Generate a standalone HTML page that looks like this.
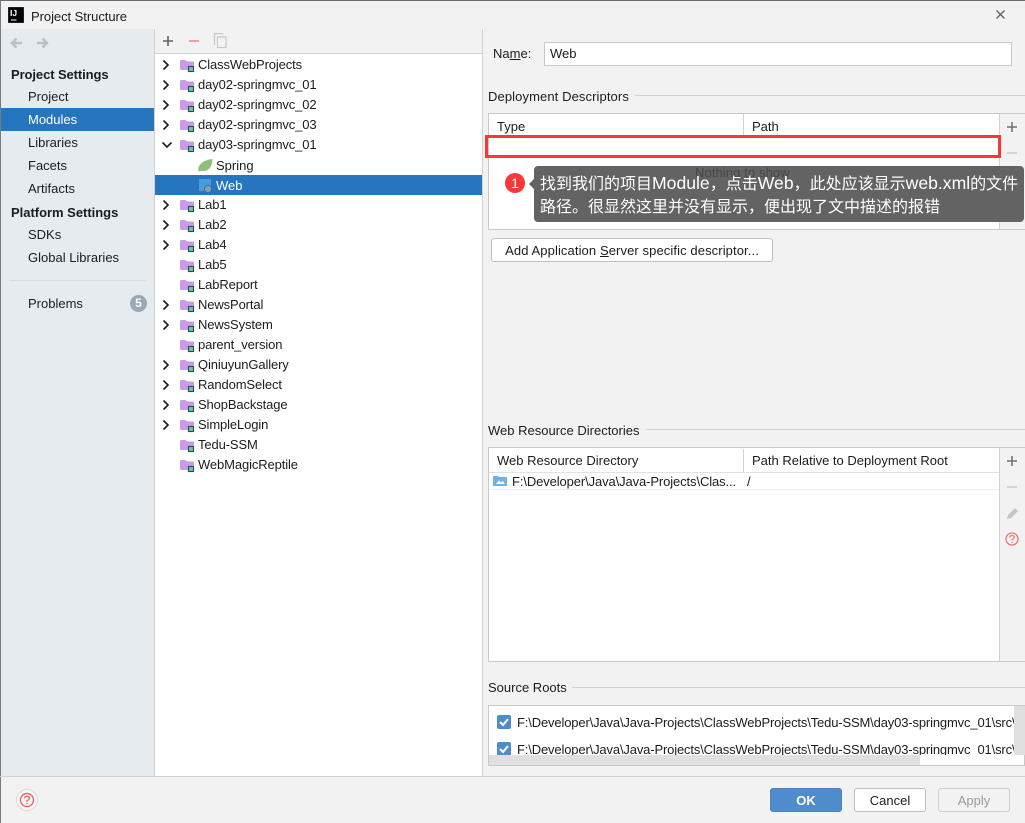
<!DOCTYPE html>
<html><head><meta charset="utf-8"><title>Project Structure</title>
<style>
html,body{margin:0;padding:0}
body{width:1025px;height:823px;overflow:hidden;position:relative;background:#f2f2f2;font:13px/20px "Liberation Sans","Noto Sans CJK SC",sans-serif;color:#1c1c1c}
div,span,svg{position:absolute}
.t{white-space:nowrap;margin-top:1px}
.s{left:28px}
.b{font-weight:bold;left:11px}
.n{left:198px;letter-spacing:-.12px}
.ln{height:1px;background:#d1d1d1}
.box{background:#fff;border:1px solid #c9c9c9;box-sizing:border-box}
.btn{box-sizing:border-box;border:1px solid #bfbfbf;border-radius:3px;background:#fff;text-align:center;line-height:23px}
u{text-decoration:underline}
em{font-style:normal;font-size:17.6px}
</style></head><body>
<svg width="0" height="0" style="position:absolute">
<defs>
<symbol id="f" viewBox="0 0 18 16"><path d="M1 4.5Q1 3 2.5 3H6.5L8 4.5H14Q15 4.5 15 5.5V13H2.5Q1 13 1 11.5Z" fill="#c89ae8"/><rect x="9.5" y="9.5" width="5" height="5" fill="#6fc0ad" stroke="#24514a" stroke-width="1.1"/></symbol>
<symbol id="r" viewBox="0 0 10 12"><path d="M2.5 1.5L7 6L2.5 10.5" fill="none" stroke="#1c1c1c" stroke-width="1.6"/></symbol>
</defs></svg>

<div style="left:0;top:0;width:1025px;height:1px;background:#6b6b6b"></div>
<div style="left:0;top:0;width:1px;height:823px;background:#7a7a7a"></div>

<!-- title bar -->
<svg style="left:8px;top:7px" width="16" height="16" viewBox="0 0 16 16"><rect width="16" height="16" fill="#000"/><rect x="0" y="0" width="16" height="16" fill="none" stroke="#1f7fd1" stroke-width=".6"/><text x="2" y="9" font-family="Liberation Sans" font-weight="bold" font-size="8.5" fill="#fff">IJ</text><rect x="3" y="12.5" width="5.5" height="1" fill="#fff"/></svg>
<span class="t" style="left:31px;top:6px;letter-spacing:-.05px">Project Structure</span>
<svg style="left:995px;top:9px" width="12" height="12"><path d="M1.5 1.5L9.5 9.5M9.5 1.5L1.5 9.5" stroke="#5c6166" stroke-width="1.3"/></svg>

<!-- sidebar -->
<div style="left:1px;top:29px;width:153px;height:747px;background:#e6ebf0"></div>
<div style="left:154px;top:29px;width:1px;height:747px;background:#cfd2d4"></div>
<svg style="left:10px;top:37px" width="40" height="12"><path d="M2 6H12M6.5 1.5L2 6L6.5 10.5" fill="none" stroke="#bcc0c4" stroke-width="2.4"/><path d="M27 6H37M32.5 1.5L37 6L32.5 10.5" fill="none" stroke="#bcc0c4" stroke-width="2.4"/></svg>
<span class="t b" style="top:64px;letter-spacing:-.09px">Project Settings</span>
<span class="t s" style="top:86px">Project</span>
<div style="left:1px;top:108px;width:153px;height:23px;background:#2675bf"></div>
<span class="t s" style="top:109px;color:#fff">Modules</span>
<span class="t s" style="top:132px">Libraries</span>
<span class="t s" style="top:155px">Facets</span>
<span class="t s" style="top:178px">Artifacts</span>
<span class="t b" style="top:202px;letter-spacing:-.02px">Platform Settings</span>
<span class="t s" style="top:224px">SDKs</span>
<span class="t s" style="top:247px">Global Libraries</span>
<div style="left:10px;top:280px;width:136px;height:1px;background:#dcdfe2"></div>
<span class="t s" style="top:293px">Problems</span>
<div style="left:130px;top:295px;width:17px;height:17px;border-radius:50%;background:#9aa7b5;color:#fff;font-weight:bold;font-size:12px;line-height:17px;text-align:center">5</div>

<!-- tree toolbar -->
<div style="left:155px;top:29px;width:327px;height:24px;background:#f2f2f2"></div>
<div class="ln" style="left:155px;top:53px;width:327px"></div>
<svg style="left:160px;top:33px" width="68" height="16"><path d="M8 3V13M3 8H13" stroke="#5e6265" stroke-width="1.6"/><path d="M29 8H39" stroke="#ee8a8a" stroke-width="1.6"/><path d="M54.5 12V.5H63" fill="none" stroke="#c6c8ca" stroke-width="1.2"/><rect x="57.5" y="4" width="8.5" height="10.5" fill="none" stroke="#c6c8ca" stroke-width="1.2"/></svg>

<!-- tree -->
<div style="left:155px;top:54px;width:327px;height:722px;background:#fff"></div>
<div style="left:482px;top:29px;width:1px;height:747px;background:#d1d1d1"></div>
<div style="left:155px;top:175px;width:327px;height:20px;background:#2675bf"></div>

<svg style="left:161px;top:59px" width="10" height="12"><use href="#r"/></svg><svg style="left:179px;top:57px" width="18" height="16"><use href="#f"/></svg><span class="t n" style="top:54px">ClassWebProjects</span>
<svg style="left:161px;top:79px" width="10" height="12"><use href="#r"/></svg><svg style="left:179px;top:77px" width="18" height="16"><use href="#f"/></svg><span class="t n" style="top:74px">day02-springmvc_01</span>
<svg style="left:161px;top:99px" width="10" height="12"><use href="#r"/></svg><svg style="left:179px;top:97px" width="18" height="16"><use href="#f"/></svg><span class="t n" style="top:94px">day02-springmvc_02</span>
<svg style="left:161px;top:119px" width="10" height="12"><use href="#r"/></svg><svg style="left:179px;top:117px" width="18" height="16"><use href="#f"/></svg><span class="t n" style="top:114px">day02-springmvc_03</span>
<svg style="left:161px;top:139px" width="12" height="12"><path d="M1.5 3.5L6 8L10.5 3.5" fill="none" stroke="#1c1c1c" stroke-width="1.6"/></svg><svg style="left:179px;top:137px" width="18" height="16"><use href="#f"/></svg><span class="t n" style="top:134px">day03-springmvc_01</span>
<svg style="left:197px;top:158px" width="16" height="15"><path d="M1.5 13.5C0 7 6 2 15.5 1C15.5 9 11 14 5 13C3.8 12.8 2.6 13 1.5 13.5Z" fill="#8ec07c"/></svg><span class="t" style="left:216px;top:155px">Spring</span>
<svg style="left:198px;top:178px" width="16" height="15"><rect x="1" y="1" width="12" height="12" fill="#4a9bd8"/><circle cx="10" cy="11" r="3.6" fill="#8a9cab" stroke="#2675bf"/></svg><span class="t" style="left:216px;top:175px;color:#fff">Web</span>
<svg style="left:161px;top:199px" width="10" height="12"><use href="#r"/></svg><svg style="left:179px;top:197px" width="18" height="16"><use href="#f"/></svg><span class="t n" style="top:194px">Lab1</span>
<svg style="left:161px;top:219px" width="10" height="12"><use href="#r"/></svg><svg style="left:179px;top:217px" width="18" height="16"><use href="#f"/></svg><span class="t n" style="top:214px">Lab2</span>
<svg style="left:161px;top:239px" width="10" height="12"><use href="#r"/></svg><svg style="left:179px;top:237px" width="18" height="16"><use href="#f"/></svg><span class="t n" style="top:234px">Lab4</span>
<svg style="left:179px;top:257px" width="18" height="16"><use href="#f"/></svg><span class="t n" style="top:254px">Lab5</span>
<svg style="left:179px;top:277px" width="18" height="16"><use href="#f"/></svg><span class="t n" style="top:274px">LabReport</span>
<svg style="left:161px;top:299px" width="10" height="12"><use href="#r"/></svg><svg style="left:179px;top:297px" width="18" height="16"><use href="#f"/></svg><span class="t n" style="top:294px">NewsPortal</span>
<svg style="left:161px;top:319px" width="10" height="12"><use href="#r"/></svg><svg style="left:179px;top:317px" width="18" height="16"><use href="#f"/></svg><span class="t n" style="top:314px">NewsSystem</span>
<svg style="left:179px;top:337px" width="18" height="16"><use href="#f"/></svg><span class="t n" style="top:334px">parent_version</span>
<svg style="left:161px;top:359px" width="10" height="12"><use href="#r"/></svg><svg style="left:179px;top:357px" width="18" height="16"><use href="#f"/></svg><span class="t n" style="top:354px">QiniuyunGallery</span>
<svg style="left:161px;top:379px" width="10" height="12"><use href="#r"/></svg><svg style="left:179px;top:377px" width="18" height="16"><use href="#f"/></svg><span class="t n" style="top:374px">RandomSelect</span>
<svg style="left:161px;top:399px" width="10" height="12"><use href="#r"/></svg><svg style="left:179px;top:397px" width="18" height="16"><use href="#f"/></svg><span class="t n" style="top:394px">ShopBackstage</span>
<svg style="left:161px;top:419px" width="10" height="12"><use href="#r"/></svg><svg style="left:179px;top:417px" width="18" height="16"><use href="#f"/></svg><span class="t n" style="top:414px">SimpleLogin</span>
<svg style="left:179px;top:437px" width="18" height="16"><use href="#f"/></svg><span class="t n" style="top:434px">Tedu-SSM</span>
<svg style="left:179px;top:457px" width="18" height="16"><use href="#f"/></svg><span class="t n" style="top:454px">WebMagicReptile</span>

<!-- name -->
<span class="t" style="left:493px;top:43px">Na<u>m</u>e:</span>
<div class="box" style="left:544px;top:42px;width:468px;height:24px;line-height:21px;padding-left:5px">Web</div>

<!-- Deployment Descriptors -->
<span class="t" style="left:488px;top:86px;letter-spacing:.1px">Deployment Descriptors</span>
<div class="ln" style="left:635px;top:95px;width:390px"></div>
<div class="box" style="left:488px;top:113px;width:537px;height:117px"></div>
<div style="left:999px;top:114px;width:26px;height:115px;background:#f2f2f2;border-left:1px solid #d1d1d1"></div>
<div style="left:743px;top:114px;width:1px;height:21px;background:#d1d1d1"></div>
<span class="t" style="left:497px;top:116px">Type</span>
<span class="t" style="left:752px;top:116px">Path</span>
<svg style="left:1005px;top:120px" width="14" height="40"><path d="M7 2V12M2 7H12" stroke="#6a6e71" stroke-width="1.5"/><path d="M2 33H12" stroke="#c9cbcd" stroke-width="1.5"/></svg>
<div style="left:485px;top:135px;width:516px;height:23px;box-sizing:border-box;border:3px solid #f73838"></div>
<div style="left:505px;top:173px;width:20px;height:20px;border-radius:50%;background:#f73838;color:#fff;font-size:14px;line-height:20px;text-align:center">1</div>
<div style="left:529px;top:179px;width:0;height:0;border:5px solid transparent;border-right-color:#636363;border-left-width:0"></div>
<div style="left:534px;top:166px;width:490px;height:56px;border-radius:4px;background:#636363"></div>
<span class="t" style="left:695px;top:162px;color:#474747;letter-spacing:.1px">Nothing to show</span>
<div style="left:540px;top:172px;width:484px;font-size:16px;line-height:23px;color:#fff;white-space:nowrap">找到我们的项目<em>Module</em>，点击<em>Web</em>，此处应该显示<em>web.xml</em>的文件<br>路径。很显然这里并没有显示，便出现了文中描述的报错</div>

<div class="btn" style="left:491px;top:238px;width:282px;height:24px;letter-spacing:.1px">Add Application <u>S</u>erver specific descriptor...</div>

<!-- Web Resource Directories -->
<span class="t" style="left:488px;top:420px">Web Resource Directories</span>
<div class="ln" style="left:646px;top:429px;width:379px"></div>
<div class="box" style="left:488px;top:447px;width:537px;height:215px"></div>
<div style="left:999px;top:448px;width:26px;height:213px;background:#f2f2f2;border-left:1px solid #d1d1d1"></div>
<div style="left:743px;top:449px;width:1px;height:23px;background:#d1d1d1"></div>
<div class="ln" style="left:489px;top:472px;width:510px;background:#e2e2e2"></div>
<div class="ln" style="left:489px;top:489px;width:510px;background:#efefef"></div>
<span class="t" style="left:497px;top:450px">Web Resource Directory</span>
<span class="t" style="left:752px;top:450px">Path Relative to Deployment Root</span>
<svg style="left:493px;top:475px" width="14" height="12"><path d="M0 2Q0 1 1 1H5L6 2H13Q14 2 14 3V11H0Z" fill="#6db3ea"/><path d="M3 9L6 5.5L8 7.5L9.5 6L12 9Z" fill="#fff"/></svg>
<span class="t" style="left:512px;top:471px;letter-spacing:-.11px">F:\Developer\Java\Java-Projects\Clas...</span>
<span class="t" style="left:747px;top:471px">/</span>
<svg style="left:1004px;top:453px" width="16" height="95"><path d="M8 3V13M3 8H13" stroke="#6a6e71" stroke-width="1.5"/><path d="M3 34H13" stroke="#c9cbcd" stroke-width="1.5"/><path d="M3 66L4 62L11 55L14 58L7 65Z" fill="#c3c5c7"/><circle cx="8" cy="86" r="6" fill="none" stroke="#e77" stroke-width="1.3"/><path d="M5.8 84.5Q6 82.5 8 82.5Q10.2 82.5 10.2 84.3Q10.2 85.5 8 86.8V87.5M8 88.7V90" fill="none" stroke="#e77" stroke-width="1.2"/></svg>

<!-- Source Roots -->
<span class="t" style="left:488px;top:677px">Source Roots</span>
<div class="ln" style="left:572px;top:687px;width:453px"></div>
<div class="box" style="left:488px;top:705px;width:537px;height:61px;overflow:hidden"></div>
<svg style="left:497px;top:715px" width="14" height="14"><rect width="14" height="14" rx="2" fill="#4f8ccb"/><path d="M3 7L6 10L11 4" fill="none" stroke="#fff" stroke-width="2"/></svg>
<span class="t" style="left:517px;top:712px;width:497px;overflow:hidden;letter-spacing:-.15px">F:\Developer\Java\Java-Projects\ClassWebProjects\Tedu-SSM\day03-springmvc_01\src\W</span>
<svg style="left:497px;top:742px" width="14" height="13"><rect width="14" height="14" rx="2" fill="#4f8ccb"/><path d="M3 7L6 10L11 4" fill="none" stroke="#fff" stroke-width="2"/></svg>
<span class="t" style="left:517px;top:739px;width:497px;height:15px;overflow:hidden;line-height:20px;letter-spacing:-.15px">F:\Developer\Java\Java-Projects\ClassWebProjects\Tedu-SSM\day03-springmvc_01\src\W</span>
<div style="left:489px;top:755px;width:431px;height:10px;background:#e0e0e0"></div>
<div style="left:1014px;top:706px;width:11px;height:49px;background:#e0e0e0"></div>

<!-- footer -->
<div class="ln" style="left:0;top:776px;width:1025px"></div>
<div style="left:16px;top:789px;width:20px;height:20px;border-radius:50%;border:1px solid #d9d9d9;background:#f7f7f7"></div>
<svg style="left:19px;top:792px" width="16" height="16"><circle cx="8" cy="8" r="6.5" fill="none" stroke="#e66" stroke-width="1.4"/><path d="M5.6 6.4Q5.8 4.3 8 4.3Q10.4 4.3 10.4 6.2Q10.4 7.4 8 8.8V9.8M8 10.8V12.2" fill="none" stroke="#e66" stroke-width="1.3"/></svg>
<div class="btn" style="left:770px;top:788px;width:72px;height:24px;background:#4f8ccb;border-color:#4a84c0;color:#fff;font-weight:bold">OK</div>
<div class="btn" style="left:854px;top:788px;width:72px;height:24px">Cancel</div>
<div class="btn" style="left:938px;top:788px;width:72px;height:24px;background:#f2f2f2;border-color:#cfcfcf;color:#9a9a9a">Apply</div>
</body></html>
